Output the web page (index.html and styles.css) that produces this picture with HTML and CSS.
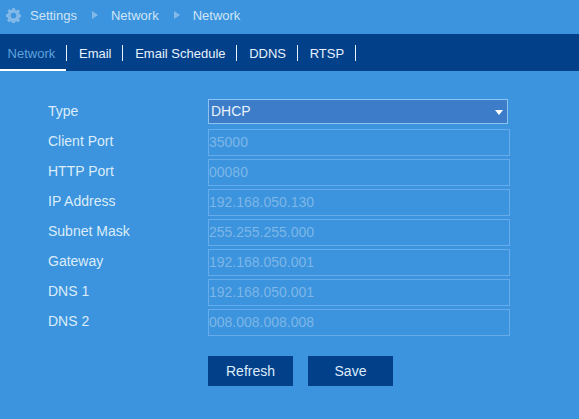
FILE: index.html
```html
<!DOCTYPE html>
<html lang="en">
<head>
    <meta charset="UTF-8">
    <title>Network</title>
    <link rel="stylesheet" href="styles.css">
</head>
<body>
    <!-- breadcrumb -->
    <div class="crumbs">
        <svg class="gear" width="15" height="15" viewBox="0 0 16 16">
            <path fill-rule="evenodd" d="M6.600 0h2.800l.4 2.100 1.300.6 1.800-1.200 2 2-1.200 1.800.6 1.300 2.100.4v2.800l-2.100.4-.6 1.300 1.200 1.800-2 2-1.800-1.200-1.300.6-.4 2.100H6.600l-.4-2.100-1.300-.6-1.800 1.200-2-2 1.200-1.800-.6-1.300L0 9.400V6.600l2.100-.4.6-1.300-1.200-1.800 2-2 1.800 1.200 1.300-.6zM8 5a3 3 0 1 0 0 6 3 3 0 0 0 0-6z"/>
        </svg>
        <span>Settings</span>
        <i class="arrow"></i>
        <span>Network</span>
        <i class="arrow"></i>
        <span>Network</span>
    </div>

    <!-- tabs -->
    <div class="tabs">
        <a href="#" class="tab active">Network</a>
        <a href="#" class="tab">Email</a>
        <a href="#" class="tab">Email Schedule</a>
        <a href="#" class="tab">DDNS</a>
        <a href="#" class="tab">RTSP</a>
    </div>

    <!-- form -->
    <div class="form">
        <div class="row first">
            <label>Type</label>
            <div class="select">DHCP<i class="caret"></i></div>
        </div>
        <div class="row"><label>Client Port</label><input class="field" value="35000" disabled></div>
        <div class="row"><label>HTTP Port</label><input class="field" value="00080" disabled></div>
        <div class="row"><label>IP Address</label><input class="field" value="192.168.050.130" disabled></div>
        <div class="row"><label>Subnet Mask</label><input class="field" value="255.255.255.000" disabled></div>
        <div class="row"><label>Gateway</label><input class="field" value="192.168.050.001" disabled></div>
        <div class="row"><label>DNS 1</label><input class="field" value="192.168.050.001" disabled></div>
        <div class="row"><label>DNS 2</label><input class="field" value="008.008.008.008" disabled></div>
        <div class="buttons">
            <button class="btn">Refresh</button>
            <button class="btn">Save</button>
        </div>
    </div>
</body>
</html>
```

FILE: styles.css
```css
body {
    margin: 0;
    height: 419px;
    overflow: hidden;
    background: #3b94dd;
    font-family: "Liberation Sans", Arial, sans-serif;
    font-size: 14px;
    color: #dcecfa;
}

/* breadcrumb */
.crumbs {
    box-sizing: border-box;
    height: 34px;
    display: flex;
    align-items: center;
    padding: 0 0 4px 6px;
    font-size: 13px;
    color: #cfe4f8;
}

.gear {
    fill: #83b9e8;
    margin-right: 9px;
}

.arrow {
    width: 0;
    height: 0;
    margin: 0 13px 0 15px;
    border-left: 6px solid #83b9e8;
    border-top: 4px solid transparent;
    border-bottom: 4px solid transparent;
}

/* tabs */
.tabs {
    height: 37px;
    display: flex;
    background: #03408a;
}

.tab {
    position: relative;
    height: 35px;
    line-height: 39px;
    margin-right: 1px;
    padding: 0 10.7px 0 12px;
    color: #e6f2fc;
    text-decoration: none;
    font-size: 13px;
}

.tab::after {
    content: "";
    position: absolute;
    right: -1px;
    top: 11px;
    width: 1px;
    height: 16px;
    background: #e6f2fc;
}

.tab.active {
    padding-left: 7.6px;
    color: #5ea3dc;
    border-bottom: 2px solid #fff;
}

/* form */
.form {
    padding: 28px 0 0 48px;
}

.row {
    display: flex;
    align-items: center;
    height: 27px;
    margin-bottom: 3px;
}

.row.first {
    height: 25px;
    margin-bottom: 5px;
}

.row label {
    width: 160px;
    margin-bottom: 4px;
    font-size: 14px;
}

.row.first label {
    margin-bottom: 2px;
}

.select {
    position: relative;
    box-sizing: border-box;
    width: 300px;
    height: 25px;
    line-height: 23px;
    padding-left: 2px;
    border: 1px solid #8cc3f0;
    background: #3d7cc8;
    color: #e6f2fc;
    font-size: 14px;
}

.caret {
    position: absolute;
    right: 4px;
    top: 10px;
    border-top: 5px solid #fff;
    border-left: 4px solid transparent;
    border-right: 4px solid transparent;
}

.field {
    box-sizing: border-box;
    width: 302px;
    height: 27px;
    padding: 0 0 2px 0;
    border: 1px solid #66aceb;
    background: transparent;
    color: #7db6e8;
    font-family: inherit;
    font-size: 14px;
}

.buttons {
    display: flex;
    gap: 15px;
    margin: 20px 0 0 160px;
}

.btn {
    width: 85px;
    height: 30px;
    border: none;
    background: #03408a;
    color: #dcecfa;
    font-family: inherit;
    font-size: 14px;
}
```
